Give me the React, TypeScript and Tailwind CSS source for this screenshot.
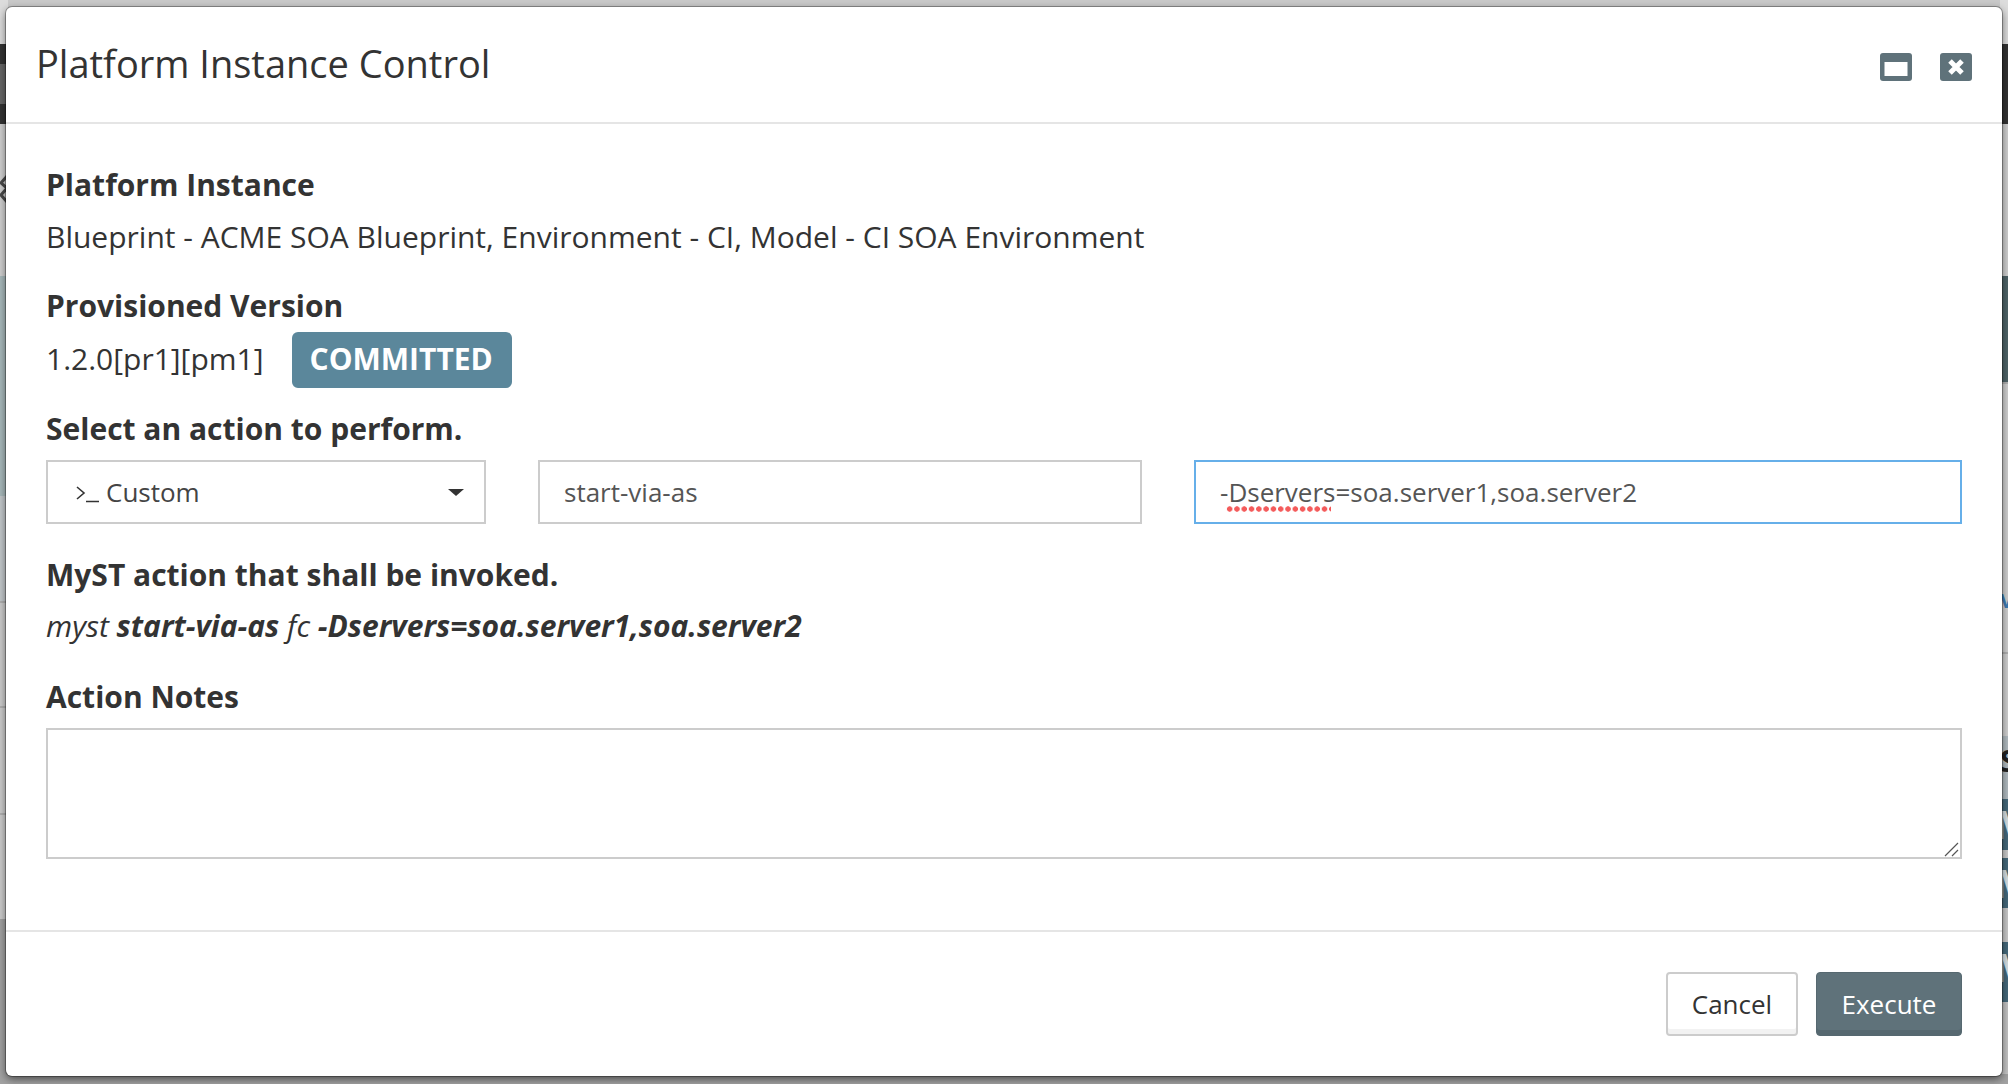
const Label = ({ children, className = "" }: { children: React.ReactNode; className?: string }) => (
  <h4 className={`text-[30px] leading-[38px] font-bold text-[#333333] ${className}`}>{children}</h4>
);

const TealRow = ({ height, gap }: { height: string; gap: string }) => (
  <div className={`${height} ${gap} overflow-hidden bg-[#45697b] text-[40px] leading-[50px] font-bold text-[#d5e0e5]`}>
    <span className="ml-[-6px]">M</span>
  </div>
);

const App = () => {
  return (
    <div className="relative h-[1084px] w-[2008px] overflow-hidden bg-[#c9c9c9] font-['Open_Sans',sans-serif]">
      {/* page showing behind the dialog, only its edges stay visible */}
      <div className="flex h-[1084px] justify-between">
        <div className="flex w-[8px] flex-col">
          <div className="h-[44px] bg-[#dcdcdc]" />
          <div className="h-[20px] bg-[#333333]" />
          <div className="h-[40px] bg-[#666666]" />
          <div className="h-[20px] bg-[#333333]" />
          <div className="flex h-[152px] items-center bg-[#d0d0d0] pb-[18px]">
            <svg width="8" height="36" viewBox="0 0 8 36" fill="none" stroke="#4a4a4a" strokeWidth="3">
              <path d="M8 2L1 10l7 6M8 14L1 22l7 8" />
            </svg>
          </div>
          <div className="h-[220px] bg-[#a9babc]" />
          <div className="h-[105px] bg-[#c3c8cb]" />
          <div className="h-[105px] border-t-2 border-[#b0b0b0] bg-[#cccccc]" />
          <div className="h-[107px] border-t-2 border-[#b0b0b0] bg-[#cccccc]" />
          <div className="h-[106px] border-t-2 border-[#b0b0b0] bg-[#cccccc]" />
          <div className="flex-1 bg-[#a2a2a2]" />
        </div>
        <div className="flex w-[8px] flex-col">
          <div className="h-[44px] bg-[#dcdcdc]" />
          <div className="h-[80px] bg-[#333333]" />
          <div className="h-[152px] bg-[#d0d0d0]" />
          <div className="h-[106px] bg-[#4f6468]" />
          <div className="h-[212px] border-t-2 border-[#b0b0b0] bg-[#d0d0d0]" />
          <div className="h-[14px] overflow-hidden bg-[#d0d0d0] text-[20px] leading-[14px] font-bold text-[#3d7bb5]">V</div>
          <div className="h-[44px] bg-[#d0d0d0]" />
          <div className="h-[84px] border-t-2 border-[#b0b0b0] bg-[#d0d0d0]" />
          <div className="h-[63px] overflow-hidden bg-[#b1bbc0] text-[30px] leading-[50px] font-bold text-[#222222]">S</div>
          <TealRow height="h-[51px]" gap="mb-[8px]" />
          <TealRow height="h-[50px]" gap="mb-[34px]" />
          <TealRow height="h-[60px]" gap="mb-0" />
          <div className="flex-1 bg-[#c4c4c4]" />
        </div>
      </div>
      <div className="absolute inset-x-0 bottom-0 h-[10px] bg-[#a2a2a2]" />

      <div className="absolute left-[6px] top-[7px] flex h-[1069px] w-[1996px] flex-col rounded-[6px] bg-white shadow-[0_3px_8px_rgba(0,0,0,0.55),0_0_0_1px_rgba(0,0,0,0.3)]">
        <div className="flex h-[117px] items-center justify-between border-b-2 border-[#e5e5e5] pb-[2px] pl-[30px] pr-[30px]">
          <h3 className="mt-[-2px] text-[38px] leading-[50px] text-[#333333]">Platform Instance Control</h3>
          <div className="mt-[6px] flex items-center gap-[28px]">
            <svg width="32" height="28" viewBox="0 0 32 28">
              <rect width="32" height="28" rx="3" fill="#5f727a" />
              <rect x="4.5" y="9" width="23" height="14" fill="#fff" />
            </svg>
            <svg width="32" height="28" viewBox="0 0 32 28">
              <rect width="32" height="28" rx="3" fill="#5f727a" />
              <path d="M10 8l12 12M22 8L10 20" stroke="#fff" strokeWidth="5" />
            </svg>
          </div>
        </div>

        <div className="flex-1 px-[40px] pt-[42px] text-[#333333]">
          <Label>Platform Instance</Label>
          <p className="mt-[14px] text-[30px] leading-[38px]">
            Blueprint - ACME SOA Blueprint, Environment - CI, Model - CI SOA Environment
          </p>

          <Label className="mt-[31px]">Provisioned Version</Label>
          <div className="mt-[7px] flex h-[56px] items-center gap-[28px]">
            <span className="mt-[-2px] text-[30px] leading-[38px]">1.2.0[pr1][pm1]</span>
            <span className="flex h-[56px] items-center rounded-[6px] bg-[#5b879b] pb-[3px] pl-[18px] pr-[19px] text-[30px] font-bold text-white">
              COMMITTED
            </span>
          </div>

          <Label className="mt-[22px]">Select an action to perform.</Label>
          <div className="mt-[12px] flex gap-[52px]">
            <div className="flex h-[64px] w-[440px] items-center justify-between border-2 border-[#cccccc] pl-[28px] pr-[20px] text-[26px] text-[#444444]">
              <span className="flex items-center gap-[6px]">
                <svg width="24" height="17" viewBox="0 0 24 17" fill="none" stroke="#333333" strokeWidth="1.6" className="mt-[4px]">
                  <path d="M1 1l7 6-7 6M10 15.5h13" />
                </svg>
                Custom
              </span>
              <span className="h-0 w-0 border-x-[8px] border-t-[7px] border-x-transparent border-t-[#333333]" />
            </div>
            <div className="flex h-[64px] w-[604px] items-center border-2 border-[#cccccc] pl-[24px] text-[26px] text-[#555555]">
              start-via-as
            </div>
            <div className="flex h-[64px] flex-1 items-center border-2 border-[#66afe9] pl-[24px] text-[26px] text-[#555555]">
              <span>
                -<span className="relative">
                  Dservers
                  <span className="absolute bottom-[-2px] left-[-2px] right-[4px] h-[6px] bg-[radial-gradient(circle,#f45b5b_2.4px,transparent_3px)] bg-[length:7.3px_6px]" />
                </span>=soa.server1,soa.server2
              </span>
            </div>
          </div>

          <Label className="mt-[32px]">MyST action that shall be invoked.</Label>
          <p className="mt-[13px] text-[30px] italic leading-[38px]">
            myst <b>start-via-as</b> fc <b>-Dservers=soa.server1,soa.server2</b>
          </p>

          <Label className="mt-[33px]">Action Notes</Label>
          <div className="relative mt-[12px]">
            <textarea className="block h-[131px] w-full resize-none border-2 border-[#cccccc] bg-white outline-none" />
            <svg width="15" height="15" viewBox="0 0 15 15" fill="none" stroke="#555555" strokeWidth="1.2" className="absolute bottom-[2px] right-[3px]">
              <path d="M1 14L14 1M8 14l6-6" />
            </svg>
          </div>
        </div>

        <div className="flex h-[146px] items-center justify-end gap-[18px] border-t-2 border-[#e5e5e5] px-[40px]">
          <button className="h-[64px] w-[132px] rounded-[4px] border-2 border-[#cccccc] text-[26px] text-[#333333] shadow-[inset_0_-5px_0_#f2f2f2]">
            Cancel
          </button>
          <button className="h-[64px] w-[146px] rounded-[4px] border border-[#566870] bg-[#5f727a] text-[26px] text-white shadow-[inset_0_-5px_0_#566870]">
            Execute
          </button>
        </div>
      </div>
    </div>
  );
};

export default App;
